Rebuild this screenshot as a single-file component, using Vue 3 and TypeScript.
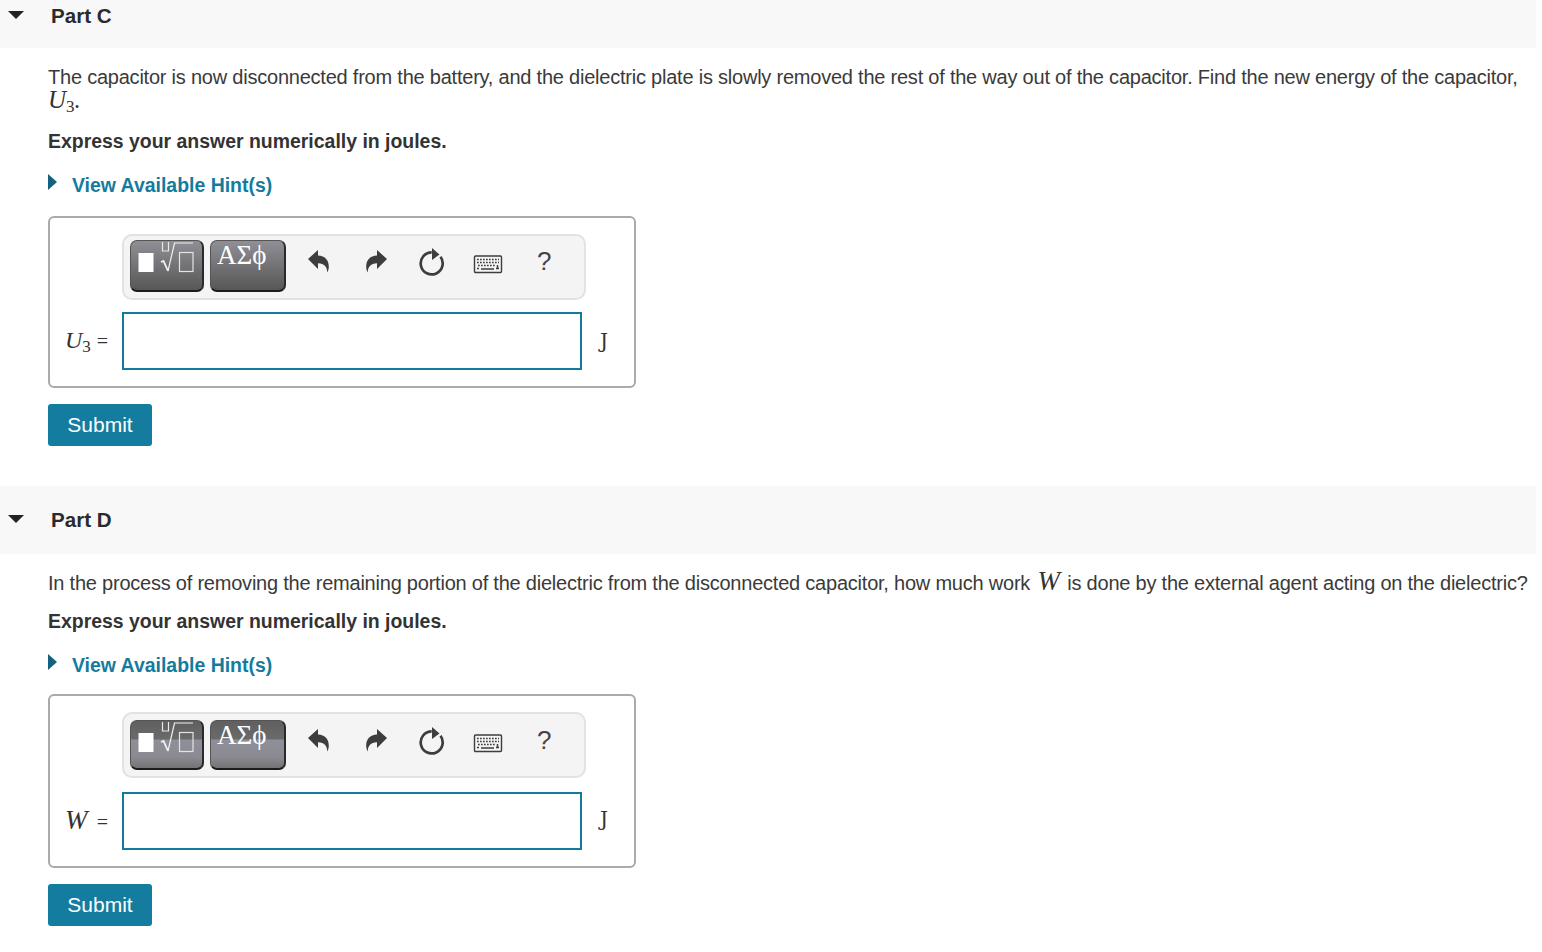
<script setup lang="ts">
interface Part {
  id: string
  title: string
  symbol: string
  sub: string
  focused: boolean
}

const parts: Part[] = [
  { id: 'c', title: 'Part C', symbol: 'U', sub: '3', focused: false },
  { id: 'd', title: 'Part D', symbol: 'W', sub: '', focused: true }
]
</script>

<template>
  <div class="page">
    <section v-for="part in parts" :key="part.id" class="part" :class="'part-' + part.id">
      <header class="part-head">
        <span class="caret-down"></span>
        <h2>{{ part.title }}</h2>
      </header>

      <div class="part-body">
        <p v-if="part.id === 'c'" class="question">
          The capacitor is now disconnected from the battery, and the dielectric plate is slowly removed the rest of the way out of the capacitor. Find the new energy of the capacitor,
          <span class="math big">U<sub>3</sub>.</span>
        </p>
        <p v-else class="question">
          In the process of removing the remaining portion of the dielectric from the disconnected capacitor, how much work
          <span class="math big wide">W</span>
          is done by the external agent acting on the dielectric?
        </p>

        <p class="express">Express your answer numerically in joules.</p>

        <div class="hint">
          <span class="caret-right"></span>
          <span>View Available Hint(s)</span>
        </div>

        <div class="answer">
          <div class="toolbar">
            <div class="tool-btn btn-templates" :class="{ split: part.focused }">
              <svg width="72" height="48" viewBox="0 0 72 48">
                <rect x="7.500" y="12" width="15" height="19" fill="#fff" />
                <path d="M31.500 1v9h6V1" fill="none" stroke="#e8e8e8" stroke-width="1.200" />
                <path d="M30 21l2.500-1 4.500 10" fill="none" stroke="#f2f2f2" stroke-width="1.800" />
                <path d="M37 30l6.500-28H62" fill="none" stroke="#f2f2f2" stroke-width="1.200" />
                <rect x="48.500" y="11.500" width="13.500" height="19" fill="none" stroke="#e4e4e4" stroke-width="1.200" />
              </svg>
            </div>
            <div class="tool-btn btn-symbols" :class="{ split: part.focused }">ΑΣϕ</div>

            <div class="tool-icons">
              <svg width="24" height="26" viewBox="0 0 24 26" class="ico">
                <path d="M1 11L11 2v5.500c7 .3 11 4.600 10.800 11.500-.1 2.400-.8 4.300-1.600 5.500.2-5.500-3.200-9.300-9.200-9.200V21z" fill="#3d3d3d" />
              </svg>
              <svg width="24" height="26" viewBox="0 0 24 26" class="ico">
                <path d="M23 11L13 2v5.500C6 7.800 2 12.100 2.200 19c.1 2.400.8 4.300 1.600 5.500-.2-5.500 3.200-9.300 9.200-9.200V21z" fill="#3d3d3d" />
              </svg>
              <svg width="28" height="30" viewBox="0 0 28 30" class="ico refresh">
                <path d="M14.700 5.400a11 11 0 1 0 8.800 4.400" fill="none" stroke="#3d3d3d" stroke-width="2.700" />
                <path d="M15 1l7.500 6.500L15 13z" fill="#3d3d3d" />
              </svg>
              <svg width="30" height="20" viewBox="0 0 30 20" class="ico kbd">
                <rect x="1.500" y="1" width="27" height="16.500" rx="1" fill="none" stroke="#3d3d3d" stroke-width="1.400" />
                <path d="M4 4.500h22M4 7.500h22M5 10.500h18" stroke="#3d3d3d" stroke-width="1.700" stroke-dasharray="1.700 1.300" fill="none" />
                <path d="M8 14h13" stroke="#3d3d3d" stroke-width="1.500" />
                <path d="M4 13.500h2M23 13.500h3M24.500 10v4" stroke="#3d3d3d" stroke-width="1.500" fill="none" />
              </svg>
              <span class="help">?</span>
            </div>
          </div>

          <div class="answer-row">
            <label class="answer-label"><span class="math" :class="{ wide: !part.sub }">{{ part.symbol }}<sub v-if="part.sub">{{ part.sub }}</sub></span><span class="eq">=</span></label>
            <input class="answer-input" type="text" />
            <span class="unit">J</span>
          </div>
        </div>

        <button class="submit" type="button">Submit</button>
      </div>
    </section>
  </div>
</template>

<style scoped>
.page {
  width: 1536px;
  font-family: "Liberation Sans", Arial, sans-serif;
  color: #333;
}
.part-c .part-head {
  height: 48px;
  align-items: flex-start;
}
.part-c .part-head h2 {
  margin-top: 4px;
}
.part-c .caret-down {
  margin-top: 11px;
}
.part-d {
  margin-top: 40px;
}
.part-head {
  display: flex;
  align-items: center;
  height: 68px;
  background: #f8f8f8;
  padding-left: 8px;
  box-sizing: border-box;
}
.part-head h2 {
  margin: 0 0 0 27px;
  font-size: 20.6px;
  line-height: 24px;
  font-weight: 700;
  color: #2b2b2b;
}
.part-d .caret-down {
  margin-bottom: 3px;
}
.caret-down {
  width: 0;
  height: 0;
  border-left: 8px solid transparent;
  border-right: 8px solid transparent;
  border-top: 8px solid #222;
}
.part-body {
  padding-left: 48px;
}
.question {
  margin: 0;
  padding-top: 17px;
  font-size: 20px;
  line-height: 24px;
  letter-spacing: -0.222px;
  color: #3a3a3a;
}
.part-c .question {
  width: 1484px;
}
.part-d .question {
  width: 1488px;
  white-space: nowrap;
}
.math {
  font-family: "Liberation Serif", "Times New Roman", serif;
  font-style: italic;
  font-size: 24px;
  line-height: 0;
  letter-spacing: 0;
  color: #333;
}
.math.big {
  font-size: 25px;
}
.math.wide {
  font-size: 27px;
}
.question .wide {
  margin: 0 2px;
}
.math sub {
  font-style: normal;
  font-size: 17px;
  line-height: 0;
  vertical-align: -4px;
}
.express {
  margin: 0;
  font-size: 19.45px;
  line-height: 24px;
  font-weight: 700;
  color: #333;
}
.part-c .express {
  padding-top: 16px;
}
.part-d .express {
  padding-top: 14px;
}
.hint {
  display: flex;
  align-items: center;
  height: 24px;
  margin-top: 20px;
  font-size: 19.45px;
  font-weight: 700;
  color: #147b9e;
}
.caret-right {
  width: 0;
  height: 0;
  margin: -6px 15px 0 0;
  border-top: 8px solid transparent;
  border-bottom: 8px solid transparent;
  border-left: 9px solid #14617f;
}
.answer {
  width: 588px;
  box-sizing: border-box;
  margin-top: 19px;
  padding: 16px 0 16px 72px;
  border: 2px solid #aaa;
  border-radius: 6px;
}
.part-c .answer {
  height: 172px;
}
.part-d .answer {
  height: 174px;
  margin-top: 17px;
}
.toolbar {
  display: flex;
  align-items: flex-start;
  width: 464px;
  height: 66px;
  box-sizing: border-box;
  padding: 4px 0 0 6px;
  background: #f4f4f4;
  border: 2px solid #e2e2e2;
  border-radius: 10px;
}
.part-d .toolbar {
  padding-top: 6px;
}
.tool-btn {
  height: 52px;
  box-sizing: border-box;
  border: 1px solid #555;
  border-bottom: 2px solid #1c1c1c;
  border-right: 2px solid #2a2a2a;
  border-radius: 7px;
  background: linear-gradient(#8f8f96, #575757);
  overflow: hidden;
}
.tool-btn.split {
  height: 50px;
  background: linear-gradient(#606060 0, #6a6a6a 18px, #8f8f99 19px, #8a8a92 36px, #6e6e6e 50px);
}
.btn-templates {
  width: 74px;
}
.btn-templates svg {
  display: block;
}
.btn-symbols {
  width: 76px;
  margin-left: 6px;
  padding-left: 6px;
  font-family: "Liberation Serif", serif;
  font-size: 27px;
  line-height: 28px;
  color: #fff;
}
.tool-icons {
  display: flex;
  align-items: center;
  height: 44px;
  margin: -1px 0 0 21px;
  gap: 33px;
}
.part-d .tool-icons {
  margin-top: -2px;
}
.ico {
  display: block;
}
.refresh {
  margin: 2px 0 0 -4px;
}
.kbd {
  margin: 8px 0 0 -5px;
}
.help {
  margin-left: 1px;
  font-size: 26px;
  line-height: 30px;
  color: #444;
}
.answer-row {
  display: flex;
  align-items: center;
  margin: 12px 0 0 -72px;
}
.part-d .answer-row {
  margin-top: 14px;
}
.answer-label {
  display: flex;
  align-items: baseline;
  justify-content: space-between;
  width: 72px;
  box-sizing: border-box;
  padding: 0 14px 0 15px;
  white-space: nowrap;
}
.part-d .answer-label {
  margin-top: 2px;
}
.eq {
  font-family: "Liberation Serif", serif;
  font-size: 20px;
}
.answer-input {
  width: 460px;
  height: 58px;
  box-sizing: border-box;
  border: 2px solid #147b9e;
  border-radius: 0;
  outline: none;
  background: #fff;
}
.unit {
  margin-left: 18px;
  font-family: "DejaVu Serif", serif;
  font-size: 20px;
  color: #333;
}
.part-d .unit {
  margin-top: -4px;
}
.submit {
  display: block;
  width: 104px;
  height: 42px;
  margin-top: 16px;
  padding: 0;
  border: 0;
  border-radius: 3px;
  background: #147d9f;
  color: #fff;
  font-family: "Liberation Sans", Arial, sans-serif;
  font-size: 21px;
}
</style>

<style>
html,
body {
  background: #fff;
}
</style>
